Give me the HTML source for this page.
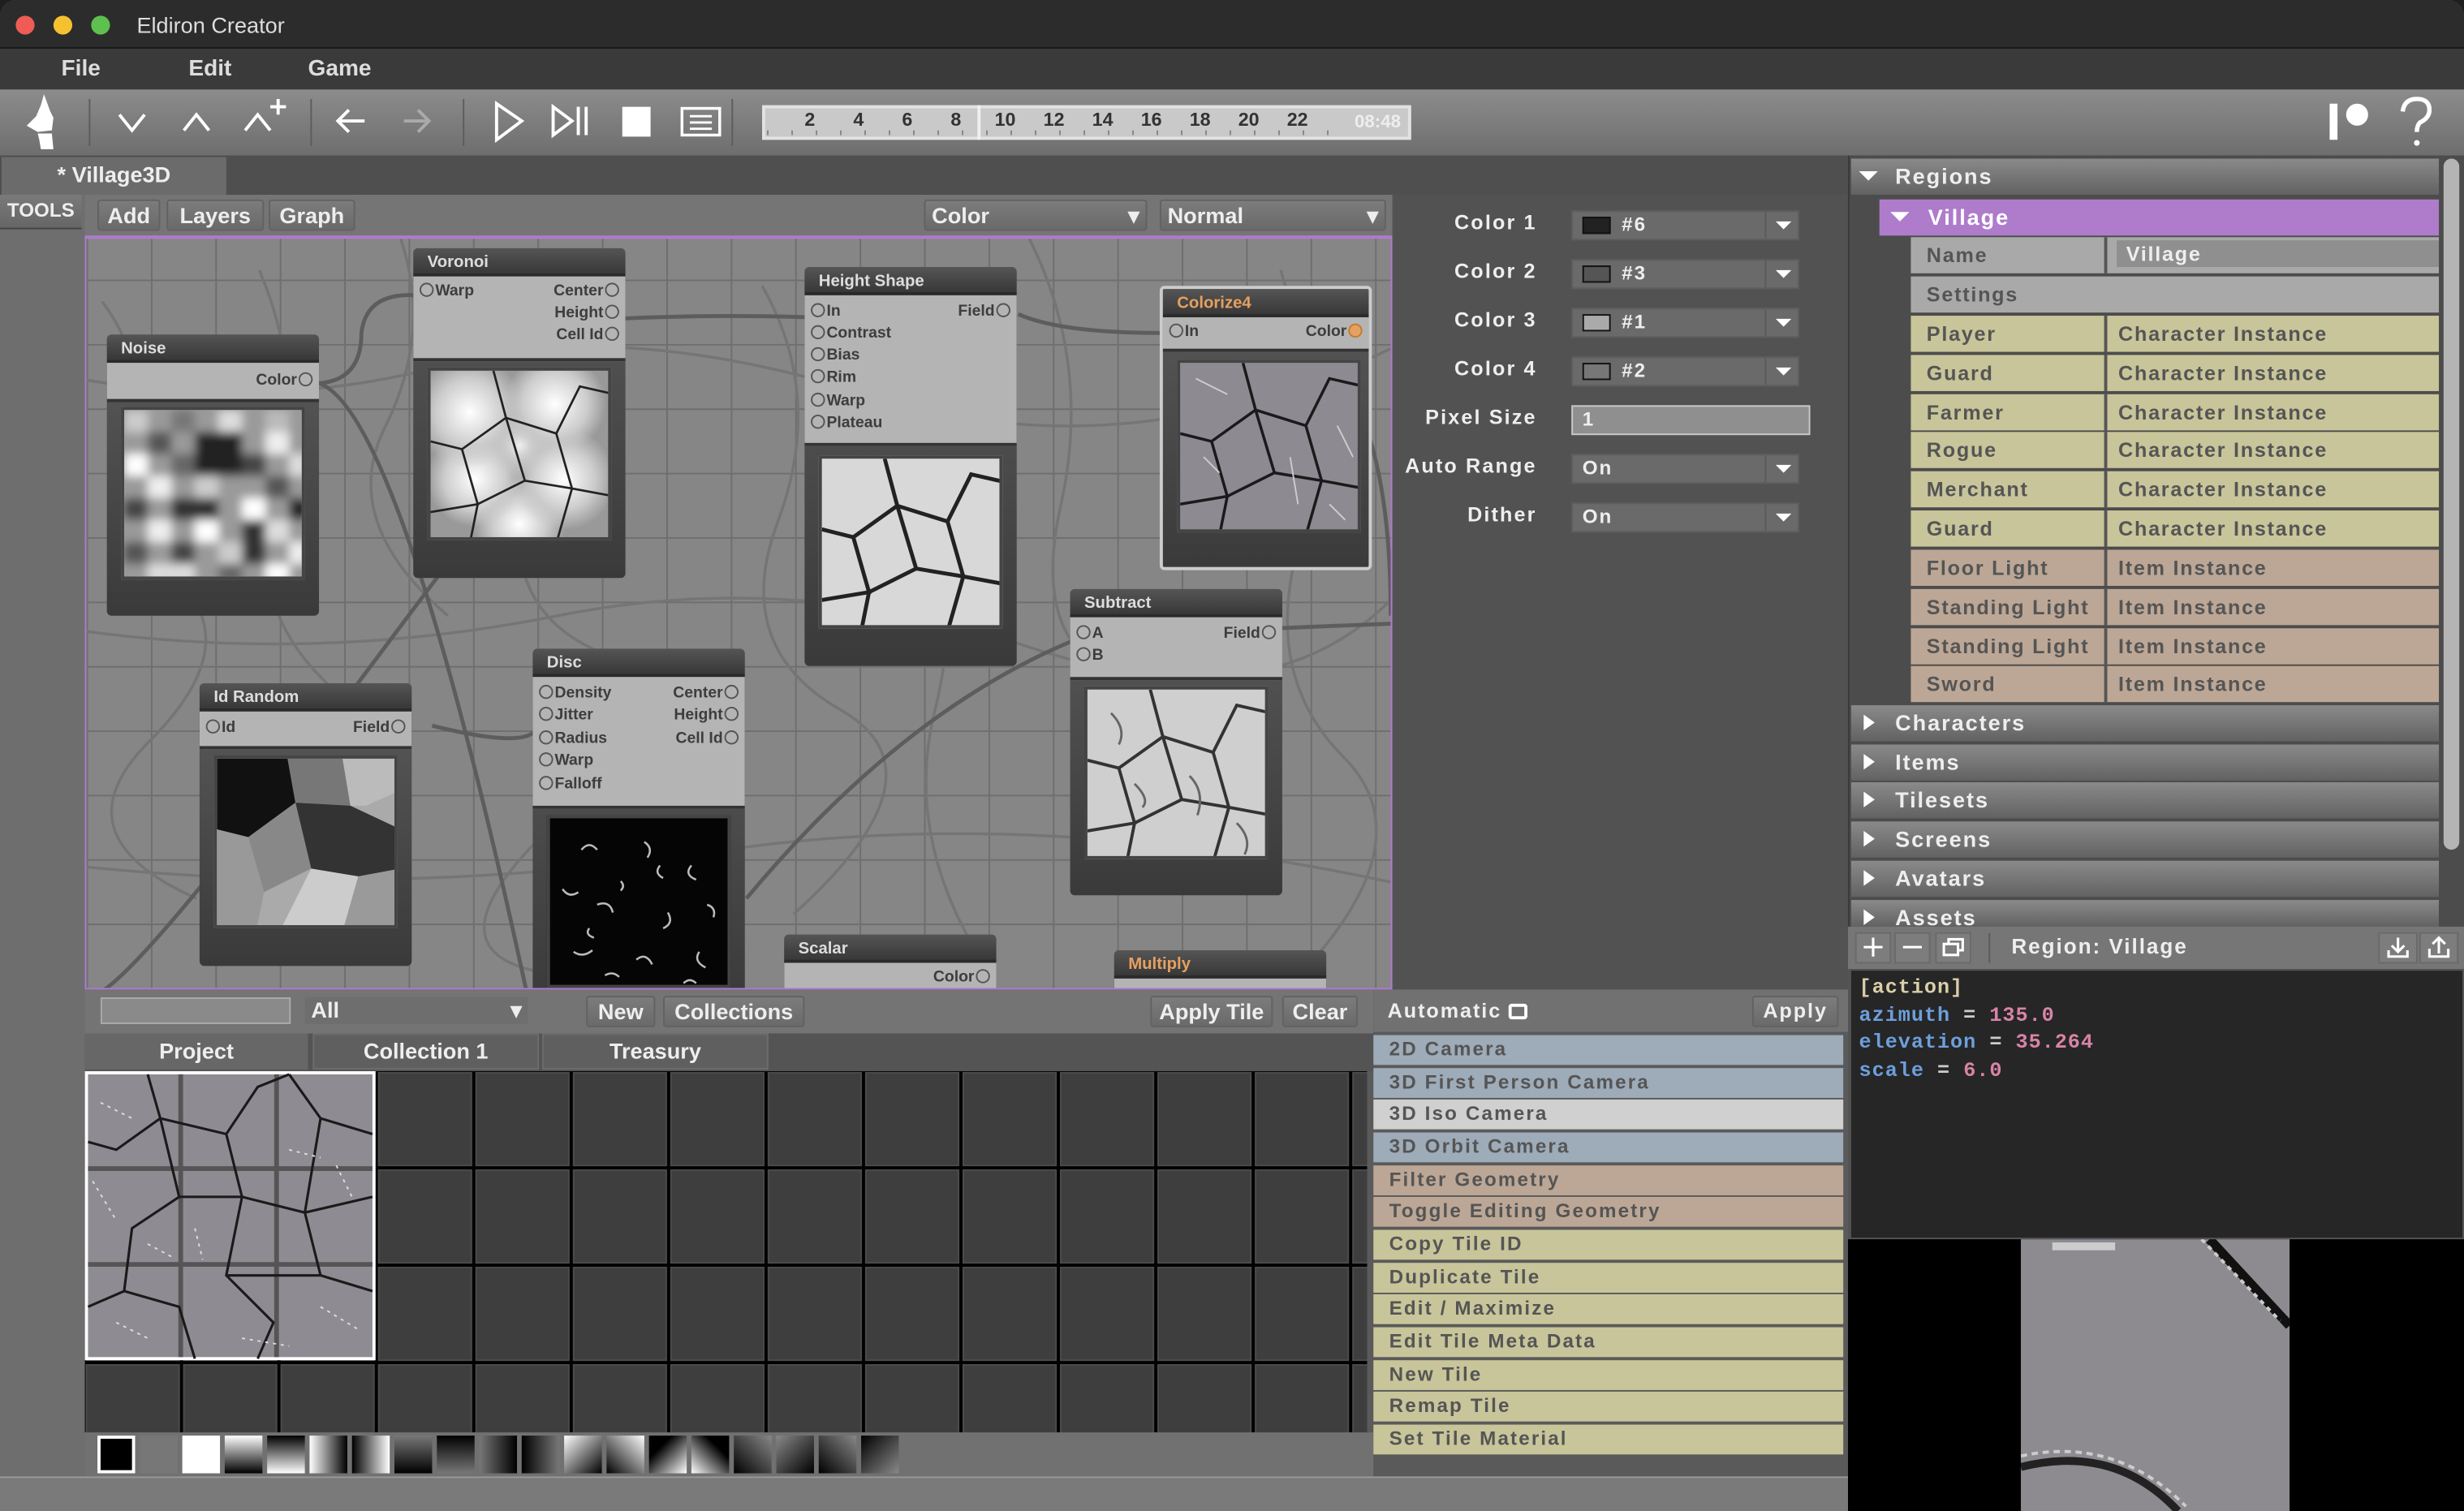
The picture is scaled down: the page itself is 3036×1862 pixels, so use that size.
<!DOCTYPE html>
<html><head><meta charset="utf-8">
<style>
*{box-sizing:border-box;margin:0;padding:0}
html,body{width:3036px;height:1862px;overflow:hidden;background:#1e1e1e}
#r{position:absolute;left:0;top:0;width:1568px;height:962px;transform:scale(1.93622,1.93555);transform-origin:0 0;background:#555;font-family:"Liberation Sans Narrow","Liberation Sans",sans-serif;font-weight:bold;overflow:hidden;border-radius:10px 10px 0 0}
.a{position:absolute}
.btn{position:absolute;height:20px;background:linear-gradient(#7c7c7c,#6a6a6a);border:1px solid #626262;border-radius:2px;color:#eee;font-size:14px;text-align:center;line-height:18px}
.node{position:absolute;width:135px;border-radius:3px;overflow:hidden;background:linear-gradient(#5a5a5a,#3a3a3a)}
.nh{height:18px;background:linear-gradient(#555,#383838);color:#ddd;font-size:10.5px;padding-left:9px;line-height:18px;border-bottom:2px solid #2a2a2a}
.nb{background:#b4b4b4;color:#3d3d3d;font-size:10px;position:relative;border-bottom:2px solid #333}
.p{position:absolute;font-size:10px;line-height:12px}
.p i{display:inline-block;width:9px;height:9px;border:1px solid #555;border-radius:50%;vertical-align:-1px;margin:0 1px}
.img{position:absolute;left:9px;width:117px;height:110px;border:2px solid #444;overflow:hidden}
.tr{position:absolute;left:1216px;width:336px;height:23px;font-family:"Liberation Sans",sans-serif;letter-spacing:0.9px;font-size:13px;color:#555;line-height:23px}
.tr span{position:absolute;left:10px}.tr b{position:absolute;left:132px;font-weight:bold}
.tr:after{content:"";position:absolute;left:123px;top:0;width:2px;height:23px;background:#555}
.hd{position:absolute;left:1178px;width:374px;height:23px;background:linear-gradient(#8a8a8a,#626262);color:#eee;font-family:"Liberation Sans",sans-serif;letter-spacing:1px;font-size:14px;line-height:23px}
.hd span{position:absolute;left:28px}.hd:before{content:"";position:absolute;left:8px;top:6px;border-left:7px solid #fff;border-top:5px solid transparent;border-bottom:5px solid transparent}
.ar{position:absolute;left:874px;width:299px;height:18.7px;font-family:"Liberation Sans",sans-serif;letter-spacing:1.1px;font-size:12.5px;color:#555;line-height:19px;padding-left:10px}
.pl{position:absolute;width:100px;left:878px;text-align:right;color:#eee;font-family:"Liberation Sans",sans-serif;letter-spacing:1.1px;font-size:13px}
.dd{position:absolute;left:1000px;width:145px;height:19px;background:#6a6a6a;border:1px solid #5e5e5e;color:#eee;font-family:"Liberation Sans",sans-serif;font-size:12.5px;letter-spacing:1px;line-height:17px}
.dd:after{content:"";position:absolute;right:4px;top:6px;border-top:5px solid #fff;border-left:5px solid transparent;border-right:5px solid transparent}
.dd:before{content:"";position:absolute;right:20px;top:0;width:1px;height:17px;background:#5a5a5a}
.sw{position:absolute;left:6px;top:3px;width:18px;height:11px;border:1.5px solid #111}
</style></head><body><div id="r">
<!-- title -->
<div class="a" style="left:0;top:0;width:1568px;height:31px;background:#2c2c2c;border-bottom:1px solid #1a1a1a"></div>
<div class="a" style="left:10px;top:10px;width:12px;height:12px;border-radius:50%;background:#ee5c55"></div>
<div class="a" style="left:34px;top:10px;width:12px;height:12px;border-radius:50%;background:#f5c130"></div>
<div class="a" style="left:58px;top:10px;width:12px;height:12px;border-radius:50%;background:#5ec04e"></div>
<div class="a" style="left:87px;top:8px;color:#ddd;font-size:14px;font-weight:normal;font-family:'Liberation Sans',sans-serif">Eldiron Creator</div>
<!-- menu -->
<div class="a" style="left:0;top:31px;width:1568px;height:26px;background:#3a3a3a"></div>
<div class="a" style="left:39px;top:36px;color:#ddd;font-size:14.5px">File</div>
<div class="a" style="left:120px;top:36px;color:#ddd;font-size:14.5px">Edit</div>
<div class="a" style="left:196px;top:36px;color:#ddd;font-size:14.5px">Game</div>
<!-- toolbar -->
<div class="a" style="left:0;top:57px;width:1568px;height:42px;background:linear-gradient(#8c8c8c,#6e6e6e)"></div>
<svg class="a" style="left:0;top:57px" width="1568" height="42" fill="none" stroke="#fff" stroke-width="2">
<path d="M28 3 L32 14 L34 18 L33 26 L24 27 L17 23 L23 17 L26 10 Z M24 28 L33 28 L34 38 L26 38 L25 32 Z" fill="#fff" stroke="none"/>
<path d="M57 6V36 M198 6V36 M295 6V36 M466 6V36" stroke="#5d5d5d" stroke-width="1"/>
<path d="M76 16 L84 26 L92 16"/><path d="M117 26 L125 16 L133 26"/><path d="M156 26 L164 16 L172 26 M177 6V16 M172 11H182"/>
<path d="M216 20H232 M222 13 L215 20 L222 27"/><path d="M257 20H272 M266 13 L273 20 L266 27" stroke="#aaa"/>
<path d="M316 9 L332 20 L316 32Z"/><path d="M352 11 L364 20 L352 29Z M368 11V29 M373 11V29"/>
<rect x="396" y="11" width="18" height="19" fill="#fff" stroke="none"/>
<rect x="434" y="12" width="24" height="17" stroke-width="1.8"/><path d="M439 17H453 M439 21H453 M439 25H453" stroke-width="1.5"/>
<path d="M1485 9V32" stroke-width="5"/><circle cx="1500" cy="16" r="7" fill="#fff" stroke="none"/>
<path d="M1529 14 Q1530 6 1538 6 Q1546 6 1546 13 Q1546 18 1540 21 Q1538 23 1538 27" stroke-width="2.8"/><circle cx="1538" cy="34" r="1.8" fill="#fff" stroke="none"/>
</svg>
<div class="a" style="left:485px;top:67px;width:413px;height:22px;background:#c9c9c9;border:2px solid #e2e2e2"></div>
<div class="a" style="left:622px;top:67px;width:2px;height:22px;background:#f0f0f0"></div>
<div class="a" style="left:500px;top:69px;width:340px;font-size:12px;color:#333">
<span class="a" style="left:12px">2</span><span class="a" style="left:43px">4</span><span class="a" style="left:74px">6</span><span class="a" style="left:105px">8</span><span class="a" style="left:133px">10</span><span class="a" style="left:164px">12</span><span class="a" style="left:195px">14</span><span class="a" style="left:226px">16</span><span class="a" style="left:257px">18</span><span class="a" style="left:288px">20</span><span class="a" style="left:319px">22</span></div>
<div class="a" style="left:862px;top:72px;font-size:11.5px;color:#eee">08:48</div>
<div class="a" style="left:488px;top:83px;width:370px;height:3px;background:repeating-linear-gradient(90deg,#888 0 1px,transparent 1px 15.5px)"></div>
<!-- tabs -->
<div class="a" style="left:0;top:99px;width:1176px;height:25px;background:#4f4f4f"></div>
<div class="a" style="left:1px;top:100px;width:143px;height:24px;background:#6b6b6b;color:#eee;font-size:14px;text-align:center;line-height:22px">* Village3D</div>
<!-- tools column -->
<div class="a" style="left:0;top:124px;width:54px;height:816px;background:#6e6e6e"></div>
<div class="a" style="left:0;top:124px;width:52px;height:22px;background:linear-gradient(#7a7a7a,#666);color:#eee;font-size:12.5px;text-align:center;line-height:21px;border-bottom:1px solid #444">TOOLS</div>
<!-- graph toolbar -->
<div class="a" style="left:54px;top:124px;width:832px;height:27px;background:#757575"></div>
<div class="btn" style="left:62px;top:127px;width:40px">Add</div>
<div class="btn" style="left:106px;top:127px;width:62px">Layers</div>
<div class="btn" style="left:171px;top:127px;width:55px">Graph</div>
<div class="btn" style="left:588px;top:127px;width:142px;text-align:left;padding-left:4px">Color<span style="position:absolute;right:4px;top:0">▾</span></div>
<div class="btn" style="left:738px;top:127px;width:144px;text-align:left;padding-left:4px">Normal<span style="position:absolute;right:4px;top:0">▾</span></div>
<!-- canvas -->
<div class="a" style="left:54px;top:150px;width:832px;height:479px;background-color:#868686;background-image:linear-gradient(#6f6f6f 1px,transparent 1px),linear-gradient(90deg,#6f6f6f 1px,transparent 1px);background-size:41px 41px;background-position:0 26px;border-top:2px solid #b07ad0;border-left:1px solid #b07ad0;border-right:1px solid #b07ad0;overflow:hidden">
<svg class="a" style="left:0;top:0" width="832" height="479" fill="none" stroke="#757575" stroke-width="1.8">
<path d="M10 40 Q40 80 30 130 T60 220 T40 320 T70 420"/><path d="M110 20 Q140 90 120 160 T150 280 T130 400"/><path d="M270 10 Q300 70 280 150 T320 260 T290 380 T330 470"/><path d="M430 30 Q470 100 440 180 T480 300 T450 430"/><path d="M600 0 Q640 80 620 170 T660 280"/><path d="M760 20 Q790 120 770 200 T800 330 T780 460"/><path d="M0 90 Q120 110 230 80 T500 100 T830 70"/><path d="M0 250 Q150 270 300 240 T600 260 T830 230"/><path d="M0 400 Q200 420 400 390 T832 410"/><path d="M200 0 Q220 60 190 120 T230 240"/><path d="M530 150 Q560 220 540 300 T570 460"/>
</svg>
<svg class="a" style="left:0;top:0" width="832" height="479" fill="none" stroke="#5d5d5d" stroke-width="2.5">
<path d="M148 92 Q175 90 175 60 Q178 34 210 36"/><path d="M148 92 Q200 110 280 479"/><path d="M336 51 Q400 48 460 50"/><path d="M336 65 Q280 140 160 300 T10 479"/><path d="M593 48 Q620 60 685 60"/><path d="M760 61 Q830 80 830 240"/><path d="M420 420 Q520 300 630 255"/><path d="M220 310 Q300 330 285 300"/><path d="M630 255 Q700 250 832 245"/>
</svg>
</div>
<!-- nodes -->
<div class="node" style="left:68px;top:213px;height:179px"><div class="nh">Noise</div><div class="nb" style="height:25px"><span class="p" style="right:3px;top:6px">Color<i></i></span></div>
<div class="img" style="top:46px;background:#999"><svg width="117" height="110"><defs><filter id="bl"><feGaussianBlur stdDeviation="3"/></filter></defs><g filter="url(#bl)">
<rect x="0" y="0" width="117" height="110" fill="#9a9a9a"/>
<rect x="0" y="0" width="15" height="14" fill="#ccc"/><rect x="30" y="0" width="15" height="14" fill="#777"/><rect x="60" y="0" width="15" height="14" fill="#ddd"/><rect x="90" y="0" width="15" height="14" fill="#bbb"/>
<rect x="15" y="14" width="15" height="14" fill="#555"/><rect x="45" y="14" width="30" height="28" fill="#222"/><rect x="90" y="14" width="15" height="14" fill="#eee"/>
<rect x="0" y="28" width="15" height="14" fill="#fff"/><rect x="30" y="28" width="15" height="14" fill="#666"/><rect x="75" y="28" width="15" height="14" fill="#444"/><rect x="105" y="28" width="12" height="14" fill="#ddd"/>
<rect x="15" y="42" width="15" height="14" fill="#eee"/><rect x="45" y="42" width="15" height="14" fill="#ccc"/><rect x="90" y="42" width="15" height="14" fill="#555"/>
<rect x="0" y="56" width="15" height="14" fill="#444"/><rect x="30" y="56" width="30" height="14" fill="#333"/><rect x="75" y="56" width="15" height="14" fill="#fff"/><rect x="105" y="56" width="12" height="14" fill="#222"/>
<rect x="15" y="70" width="15" height="14" fill="#eee"/><rect x="45" y="70" width="15" height="14" fill="#fff"/><rect x="75" y="70" width="15" height="28" fill="#333"/><rect x="90" y="70" width="15" height="14" fill="#ddd"/>
<rect x="0" y="84" width="15" height="14" fill="#555"/><rect x="30" y="84" width="15" height="14" fill="#444"/><rect x="60" y="84" width="15" height="14" fill="#ccc"/><rect x="105" y="84" width="12" height="14" fill="#eee"/>
<rect x="15" y="98" width="30" height="12" fill="#ddd"/><rect x="60" y="98" width="15" height="12" fill="#666"/><rect x="90" y="98" width="15" height="12" fill="#fff"/>
</g></svg></div></div>
<div class="node" style="left:263px;top:158px;height:210px"><div class="nh">Voronoi</div><div class="nb" style="height:54px"><span class="p" style="left:3px;top:4px"><i></i>Warp</span><span class="p" style="right:3px;top:4px">Center<i></i></span><span class="p" style="right:3px;top:18px">Height<i></i></span><span class="p" style="right:3px;top:32px">Cell Id<i></i></span></div>
<div class="img" style="top:76px;background:radial-gradient(circle at 22% 25%,#fff 0,#ccc 18%,transparent 30%),radial-gradient(circle at 70% 20%,#fff 0,#ccc 18%,transparent 28%),radial-gradient(circle at 25% 65%,#fff 0,#ccc 18%,transparent 28%),radial-gradient(circle at 75% 65%,#fff 0,#ccc 18%,transparent 30%),radial-gradient(circle at 50% 92%,#fff 0,#ccc 15%,transparent 26%),radial-gradient(circle at 50% 45%,#eee 0,#bbb 15%,transparent 25%),#999"><svg width="117" height="110" fill="none" stroke="#222" stroke-width="1.4"><path d="M40 0 L48 30 L20 50 L0 45 M48 30 L80 40 L95 10 L117 15 M80 40 L90 75 L117 80 M48 30 L60 70 L30 85 L25 110 M60 70 L90 75 L80 110 M20 50 L30 85 L0 90"/></svg></div></div>
<div class="node" style="left:512px;top:170px;height:254px"><div class="nh">Height Shape</div><div class="nb" style="height:96px"><span class="p" style="left:3px;top:5px"><i></i>In</span><span class="p" style="right:3px;top:5px">Field<i></i></span><span class="p" style="left:3px;top:19px"><i></i>Contrast</span><span class="p" style="left:3px;top:33px"><i></i>Bias</span><span class="p" style="left:3px;top:47px"><i></i>Rim</span><span class="p" style="left:3px;top:62px"><i></i>Warp</span><span class="p" style="left:3px;top:76px"><i></i>Plateau</span></div>
<div class="img" style="top:120px;background:#d8d8d8"><svg width="117" height="110" fill="none" stroke="#222" stroke-width="2.5"><path d="M40 0 L48 30 L20 50 L0 45 M48 30 L80 40 L95 10 L117 15 M80 40 L90 75 L117 80 M48 30 L60 70 L30 85 L25 110 M60 70 L90 75 L80 110 M20 50 L30 85 L0 90"/></svg></div></div>
<div class="node" style="left:738px;top:182px;height:181px;border:2px solid #ccc"><div class="nh" style="color:#e6a060">Colorize4</div><div class="nb" style="height:22px"><span class="p" style="left:3px;top:4px"><i></i>In</span><span class="p" style="right:3px;top:4px">Color<i style="background:#e6a060;border-color:#c57a30"></i></span></div>
<div class="img" style="top:45px;background:#8d8a92"><svg width="117" height="110" fill="none" stroke="#1a1a1a" stroke-width="1.8"><path d="M40 0 L48 30 L20 50 L0 45 M48 30 L80 40 L95 10 L117 15 M80 40 L90 75 L117 80 M48 30 L60 70 L30 85 L25 110 M60 70 L90 75 L80 110 M20 50 L30 85 L0 90"/><path d="M10 10 L30 20 M70 60 L75 90 M100 40 L110 60 M15 60 L25 70 M95 90 L105 100" stroke="#ccc" stroke-width="1"/></svg></div></div>
<div class="node" style="left:681px;top:375px;height:195px"><div class="nh">Subtract</div><div class="nb" style="height:40px"><span class="p" style="left:3px;top:5px"><i></i>A</span><span class="p" style="right:3px;top:5px">Field<i></i></span><span class="p" style="left:3px;top:19px"><i></i>B</span></div>
<div class="img" style="top:62px;background:#cfcfcf"><svg width="117" height="110" fill="none" stroke="#333" stroke-width="2"><path d="M40 0 L48 30 L20 50 L0 45 M48 30 L80 40 L95 10 L117 15 M80 40 L90 75 L117 80 M48 30 L60 70 L30 85 L25 110 M60 70 L90 75 L80 110 M20 50 L30 85 L0 90"/><path d="M15 15 Q25 25 20 35 M65 55 Q75 65 70 80 M95 85 Q105 95 100 105 M30 60 Q40 70 35 75" stroke="#666" stroke-width="1.5"/></svg></div></div>
<div class="node" style="left:127px;top:435px;height:180px"><div class="nh">Id Random</div><div class="nb" style="height:24px"><span class="p" style="left:3px;top:5px"><i></i>Id</span><span class="p" style="right:3px;top:5px">Field<i></i></span></div>
<div class="img" style="top:46px;background:#aaa"><svg width="117" height="110"><path d="M0 0H45L50 28L20 50L0 45Z" fill="#111"/><path d="M45 0H80L85 30L50 28Z" fill="#777"/><path d="M80 0H117V20L95 30L85 30Z" fill="#bbb"/><path d="M50 28L85 30L117 45V70L90 75L60 70Z" fill="#333"/><path d="M20 50L50 28L60 70L30 85Z" fill="#888"/><path d="M60 70L90 75L80 110H40Z" fill="#ccc"/><path d="M0 45L20 50L30 85L25 110H0Z" fill="#999"/><path d="M90 75L117 70V110H80Z" fill="#9a9a9a"/></svg></div></div>
<div class="node" style="left:339px;top:413px;height:230px"><div class="nh">Disc</div><div class="nb" style="height:84px"><span class="p" style="left:3px;top:5px"><i></i>Density</span><span class="p" style="right:3px;top:5px">Center<i></i></span><span class="p" style="left:3px;top:19px"><i></i>Jitter</span><span class="p" style="right:3px;top:19px">Height<i></i></span><span class="p" style="left:3px;top:34px"><i></i>Radius</span><span class="p" style="right:3px;top:34px">Cell Id<i></i></span><span class="p" style="left:3px;top:48px"><i></i>Warp</span><span class="p" style="left:3px;top:63px"><i></i>Falloff</span></div>
<div class="img" style="top:106px;background:#050505"><svg width="117" height="110" fill="none" stroke="#bbb" stroke-width="1.3"><path d="M20 20q5-6 10 0 M60 15q6 4 2 10 M90 30q-5 6 3 9 M30 55q8-3 10 5 M75 60q4 7-3 10 M15 85q6 4 12-1 M55 90q6-5 10 3 M95 85q-4 6 4 10 M45 40q3 3 0 6 M8 45q4 6 10 2 M100 55q6 2 4 8 M35 100q5-3 9 1 M70 30q-4 5 2 8 M85 105q4-4 8 0 M25 70q-3 4 3 6"/></svg></div></div>
<div class="node" style="left:499px;top:595px;height:40px"><div class="nh">Scalar</div><div class="nb" style="height:20px"><span class="p" style="right:3px;top:4px">Color<i></i></span></div></div>
<div class="node" style="left:709px;top:605px;height:30px"><div class="nh" style="color:#e6a060">Multiply</div><div class="nb" style="height:10px"></div></div>
<div class="a" style="left:54px;top:629px;width:832px;height:2px;background:#b07ad0"></div>
<!-- properties -->
<div class="a" style="left:887px;top:124px;width:289px;height:506px;background:#525252"></div>
<div class="pl" style="top:134px">Color 1</div><div class="pl" style="top:165px">Color 2</div><div class="pl" style="top:196px">Color 3</div><div class="pl" style="top:227px">Color 4</div><div class="pl" style="top:258px">Pixel Size</div><div class="pl" style="top:289px">Auto Range</div><div class="pl" style="top:320px">Dither</div>
<div class="dd" style="top:134px"><div class="sw" style="background:#222"></div><span style="position:absolute;left:31px">#6</span></div>
<div class="dd" style="top:165px"><div class="sw" style="background:#555"></div><span style="position:absolute;left:31px">#3</span></div>
<div class="dd" style="top:196px"><div class="sw" style="background:#aaa"></div><span style="position:absolute;left:31px">#1</span></div>
<div class="dd" style="top:227px"><div class="sw" style="background:#777"></div><span style="position:absolute;left:31px">#2</span></div>
<div class="a" style="left:1000px;top:258px;width:152px;height:19px;background:#8f8f8f;border:1px solid #c8c8c8;color:#eee;font-family:'Liberation Sans',sans-serif;font-size:12.5px;line-height:17px;padding-left:6px">1</div>
<div class="dd" style="top:289px"><span style="position:absolute;left:6px">On</span></div>
<div class="dd" style="top:320px"><span style="position:absolute;left:6px">On</span></div>
<!-- right tree -->
<div class="a" style="left:1176px;top:99px;width:392px;height:492px;background:#4c4c4c;border-left:1px solid #3a3a3a"></div>
<div class="hd" style="top:101px"><span>Regions</span></div>
<div class="a" style="left:1178px;top:101px;width:20px;height:23px;background:linear-gradient(#8a8a8a,#626262)"></div>
<div class="a" style="left:1183px;top:109px;border-top:6px solid #fff;border-left:6px solid transparent;border-right:6px solid transparent"></div>
<div class="a" style="left:1196px;top:127px;width:356px;height:23px;background:#ae7ccb;color:#fff;font-family:'Liberation Sans',sans-serif;letter-spacing:1px;font-size:14px;line-height:23px;padding-left:31px">Village</div>
<div class="a" style="left:1203px;top:135px;border-top:6px solid #fff;border-left:6px solid transparent;border-right:6px solid transparent"></div>
<div class="tr" style="top:151px;background:#a9a9a9"><span>Name</span><b style="left:131px;top:2px;width:205px;height:17px;background:#8f8f8f;color:#eee;line-height:17px;padding-left:6px;font-weight:bold">Village</b></div>
<div class="a" style="left:1216px;top:176px;width:336px;height:23px;background:#a9a9a9;font-family:'Liberation Sans',sans-serif;letter-spacing:0.9px;font-size:13px;color:#555;line-height:23px;padding-left:10px">Settings</div>
<div class="tr" style="top:201px;background:#c8c59a"><span>Player</span><b>Character Instance</b></div>
<div class="tr" style="top:226px;background:#c8c59a"><span>Guard</span><b>Character Instance</b></div>
<div class="tr" style="top:251px;background:#c8c59a"><span>Farmer</span><b>Character Instance</b></div>
<div class="tr" style="top:275px;background:#c8c59a"><span>Rogue</span><b>Character Instance</b></div>
<div class="tr" style="top:300px;background:#c8c59a"><span>Merchant</span><b>Character Instance</b></div>
<div class="tr" style="top:325px;background:#c8c59a"><span>Guard</span><b>Character Instance</b></div>
<div class="tr" style="top:350px;background:#bca796"><span>Floor Light</span><b>Item Instance</b></div>
<div class="tr" style="top:375px;background:#bca796"><span>Standing Light</span><b>Item Instance</b></div>
<div class="tr" style="top:400px;background:#bca796"><span>Standing Light</span><b>Item Instance</b></div>
<div class="tr" style="top:424px;background:#bca796"><span>Sword</span><b>Item Instance</b></div>
<div class="hd" style="top:449px"><span>Characters</span></div>
<div class="hd" style="top:474px"><span>Items</span></div>
<div class="hd" style="top:498px"><span>Tilesets</span></div>
<div class="hd" style="top:523px"><span>Screens</span></div>
<div class="hd" style="top:548px"><span>Avatars</span></div>
<div class="hd" style="top:573px;height:17px;overflow:hidden"><span>Assets</span></div>
<div class="a" style="left:1555px;top:101px;width:10px;height:440px;background:#b4b4b4;border-radius:5px"></div>
<!-- right bottom toolbar -->
<div class="a" style="left:1176px;top:590px;width:392px;height:27px;background:#767676"></div>
<svg class="a" style="left:1176px;top:590px" width="392" height="27" fill="none" stroke="#fff" stroke-width="1.6">
<rect x="5" y="4" width="22" height="19" fill="#7d7d7d" stroke="#6a6a6a" stroke-width="1"/><path d="M10 13H22 M16 7V19"/>
<rect x="30" y="4" width="22" height="19" fill="#7d7d7d" stroke="#6a6a6a" stroke-width="1"/><path d="M35 13H47"/>
<rect x="56" y="4" width="22" height="19" fill="#7d7d7d" stroke="#6a6a6a" stroke-width="1"/><rect x="61" y="11" width="9" height="7"/><path d="M64 11V8H73V15H70"/>
<path d="M90 4V23" stroke="#5a5a5a" stroke-width="1"/>
<rect x="338" y="4" width="24" height="19" fill="#7d7d7d" stroke="#6a6a6a" stroke-width="1"/><path d="M350 7V16 M346 12L350 16L354 12 M344 15V19H356V15"/>
<rect x="364" y="4" width="24" height="19" fill="#7d7d7d" stroke="#6a6a6a" stroke-width="1"/><path d="M376 17V8 M372 11L376 7L380 11 M370 14V19H382V14"/>
</svg>
<div class="a" style="left:1280px;top:595px;color:#eee;font-family:'Liberation Sans',sans-serif;letter-spacing:1px;font-size:13.5px">Region: Village</div>
<!-- code -->
<div class="a" style="left:1177px;top:617px;width:391px;height:172px;background:#262626;border:1px solid #555;font-family:'Liberation Mono',monospace;font-size:13px;line-height:17.6px;padding:2px 5px;font-weight:bold;letter-spacing:0.5px">
<div style="color:#d9cfa8">[action]</div>
<div><span style="color:#6d9fdc">azimuth</span> <span style="color:#ccc">=</span> <span style="color:#d884a6">135.0</span></div>
<div><span style="color:#6d9fdc">elevation</span> <span style="color:#ccc">=</span> <span style="color:#d884a6">35.264</span></div>
<div><span style="color:#6d9fdc">scale</span> <span style="color:#ccc">=</span> <span style="color:#d884a6">6.0</span></div></div>
<!-- preview -->
<div class="a" style="left:1176px;top:789px;width:392px;height:173px;background:#000"></div>
<div class="a" style="left:1286px;top:789px;width:171px;height:173px;background:#8d8a90"></div>
<svg class="a" style="left:1286px;top:789px" width="171" height="173"><path d="M120 0 L171 55" stroke="#111" stroke-width="6"/><path d="M115 0 L165 52" stroke="#ccc" stroke-width="2" stroke-dasharray="3 3"/><rect x="20" y="2" width="40" height="5" fill="#ccc"/><path d="M0 145 Q60 130 100 173" stroke="#222" stroke-width="5" fill="none"/><path d="M0 138 Q60 125 105 170" stroke="#ccc" stroke-width="2" stroke-dasharray="4 3" fill="none"/></svg>
<!-- bottom left tiles -->
<div class="a" style="left:54px;top:630px;width:820px;height:310px;background:#5a5a5a"></div>
<div class="a" style="left:54px;top:630px;width:820px;height:28px;background:#747474"></div>
<div class="a" style="left:64px;top:635px;width:121px;height:17px;background:#8a8a8a;border:1px solid #aaa"></div>
<div class="a" style="left:194px;top:635px;width:142px;height:17px;background:#6e6e6e;color:#eee;font-size:14px;line-height:16px;padding-left:4px">All<span style="position:absolute;right:4px">▾</span></div>
<div class="btn" style="left:373px;top:634px;width:44px">New</div>
<div class="btn" style="left:422px;top:634px;width:90px">Collections</div>
<div class="btn" style="left:732px;top:634px;width:78px">Apply Tile</div>
<div class="btn" style="left:816px;top:634px;width:48px">Clear</div>
<div class="a" style="left:54px;top:658px;width:820px;height:24px;background:#545454"></div>
<div class="a" style="left:54px;top:658px;width:142px;height:23px;background:#676767;color:#eee;font-size:14px;text-align:center;line-height:22px">Project</div>
<div class="a" style="left:199px;top:658px;width:144px;height:23px;background:#5f5f5f;border:1px solid #6c6c6c;color:#eee;font-size:14px;text-align:center;line-height:21px">Collection 1</div>
<div class="a" style="left:345px;top:658px;width:144px;height:23px;background:#5f5f5f;border:1px solid #6c6c6c;color:#eee;font-size:14px;text-align:center;line-height:21px">Treasury</div>
<svg class="a" style="left:54px;top:682px" width="816" height="230">
<defs><pattern id="g" width="62" height="62" patternUnits="userSpaceOnUse" x="0" y="0"><rect width="62" height="62" fill="#000"/><rect x="1" y="1" width="59" height="59" fill="#3e3e3e" stroke="#4b4b4b" stroke-width="1"/></pattern></defs>
<rect width="816" height="230" fill="url(#g)"/>
<rect x="1" y="1" width="183" height="182" fill="#8f8b92" stroke="#fff" stroke-width="2"/>
<path d="M61 2V182 M122 2V182 M2 62H183 M2 123H183" stroke="#555" stroke-width="3"/>
<g fill="none" stroke="#1a1a1a" stroke-width="1.6"><path d="M40 2 L48 30 L20 50 L2 45 M48 30 L90 40 L110 10 L130 2 M90 40 L100 80 L140 90 L183 80 M48 30 L60 80 L30 100 L25 140 L2 150 M60 80 L100 80 L90 130 L120 160 L110 183 M140 90 L150 130 L183 140 M25 140 L60 150 L70 183 M90 130 L150 130 M150 30 L183 40 M130 2 L150 30 L140 90"/></g>
<g fill="none" stroke="#ddd" stroke-width="1" stroke-dasharray="2 3"><path d="M10 20 L30 30 M70 100 L75 120 M160 60 L170 80 M20 160 L40 170 M100 170 L130 175 M130 50 L150 55 M5 70 L20 95 M150 150 L175 165 M40 110 L55 118"/></g>
</svg>
<div class="a" style="left:54px;top:912px;width:820px;height:28px;background:#717171"></div>
<div class="a" style="left:62px;top:914px;width:556px;height:24px;display:flex;gap:3px">
<div style="width:24px;background:#000;border:2px solid #fff"></div><div style="width:24px;background:#777"></div><div style="width:24px;background:#fff"></div><div style="width:24px;background:linear-gradient(#fff,#000)"></div><div style="width:24px;background:linear-gradient(#000,#fff)"></div><div style="width:24px;background:linear-gradient(90deg,#fff,#000)"></div><div style="width:24px;background:linear-gradient(90deg,#000,#fff)"></div><div style="width:24px;background:linear-gradient(#777,#000)"></div><div style="width:24px;background:linear-gradient(#000,#777)"></div><div style="width:24px;background:linear-gradient(90deg,#777,#000)"></div><div style="width:24px;background:linear-gradient(90deg,#000,#777)"></div><div style="width:24px;background:linear-gradient(135deg,#fff,#000)"></div><div style="width:24px;background:linear-gradient(45deg,#000,#fff)"></div><div style="width:24px;background:linear-gradient(135deg,#000 30%,#fff)"></div><div style="width:24px;background:linear-gradient(225deg,#000 30%,#fff)"></div><div style="width:24px;background:linear-gradient(45deg,#000,#888)"></div><div style="width:24px;background:linear-gradient(135deg,#888,#000)"></div><div style="width:24px;background:linear-gradient(225deg,#888,#000)"></div><div style="width:24px;background:linear-gradient(315deg,#888,#000)"></div></div>
<!-- actions -->
<div class="a" style="left:874px;top:630px;width:302px;height:310px;background:#5a5a5a"></div>
<div class="a" style="left:874px;top:630px;width:302px;height:27px;background:#717171"></div>
<div class="a" style="left:883px;top:636px;color:#eee;font-family:'Liberation Sans',sans-serif;letter-spacing:1px;font-size:13px">Automatic <span style="display:inline-block;width:12px;height:10px;border:2px solid #fff;border-radius:2px;vertical-align:-1px"></span></div>
<div class="btn" style="left:1115px;top:634px;width:55px;font-family:'Liberation Sans',sans-serif;font-size:13px;letter-spacing:1px">Apply</div>
<div class="ar" style="top:659px;background:#9eabb9">2D Camera</div>
<div class="ar" style="top:680px;background:#9eabb9">3D First Person Camera</div>
<div class="ar" style="top:700px;background:#d0d0d0">3D Iso Camera</div>
<div class="ar" style="top:721px;background:#9eabb9">3D Orbit Camera</div>
<div class="ar" style="top:742px;background:#bca796">Filter Geometry</div>
<div class="ar" style="top:762px;background:#bca796">Toggle Editing Geometry</div>
<div class="ar" style="top:783px;background:#c8c59a">Copy Tile ID</div>
<div class="ar" style="top:804px;background:#c8c59a">Duplicate Tile</div>
<div class="ar" style="top:824px;background:#c8c59a">Edit / Maximize</div>
<div class="ar" style="top:845px;background:#c8c59a">Edit Tile Meta Data</div>
<div class="ar" style="top:866px;background:#c8c59a">New Tile</div>
<div class="ar" style="top:886px;background:#c8c59a">Remap Tile</div>
<div class="ar" style="top:907px;background:#c8c59a">Set Tile Material</div>
<!-- status -->
<div class="a" style="left:0;top:940px;width:1176px;height:22px;background:#7a7a7a;border-top:1px solid #999"></div>
</div></body></html>
